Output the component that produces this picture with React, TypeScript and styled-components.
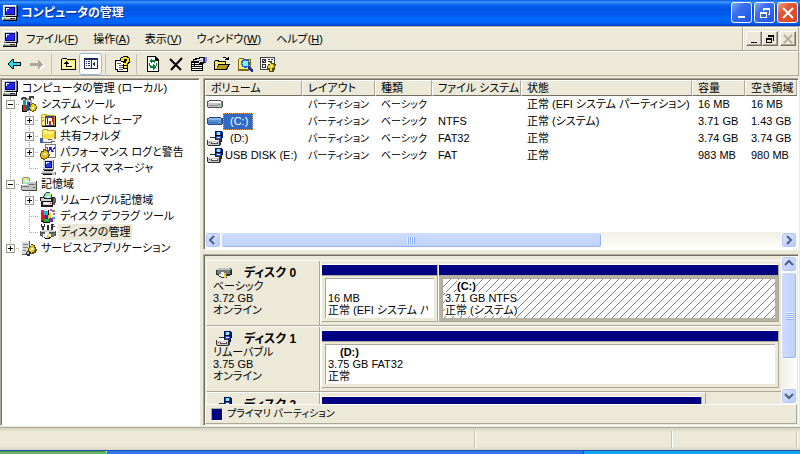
import React from "react";
import styled, { createGlobalStyle, css } from "styled-components";

const face = "#ece9d8";
const shade = "#aca899";
const dark = "#716f64";
const navy = "#000080";

const GlobalStyle = createGlobalStyle`
  * { box-sizing: border-box; }
  body {
    margin: 0;
    overflow: hidden;
    background: ${face};
    color: #000;
    font-family: "Liberation Sans", "Noto Sans CJK JP", sans-serif;
    font-size: 11px;
    line-height: 16px;
    font-feature-settings: "palt";
    cursor: default;
  }
  button {
    font: inherit;
    font-feature-settings: inherit;
    color: inherit;
    margin: 0;
    padding: 0;
    border: 0;
    background: none;
  }
  svg { display: block; flex: none; }
`;

/* ---------- icons ---------- */

const Glyph = ({ children, w = 16, h = 16 }: { children: React.ReactNode; w?: number; h?: number }) => (
  <svg width={w} height={h} viewBox={`0 0 ${w} ${h}`} shapeRendering="crispEdges" aria-hidden="true">
    {children}
  </svg>
);

const ComputerIcon = () => (
  <Glyph>
    <path fill="#707070" d="M2 0h13v12H2z" />
    <path fill="#fff" d="M1 0h13v1H1zM1 0h1v11H1z" />
    <path fill="#c8c8c8" d="M2 1h12v10H2z" />
    <path fill="#000080" d="M3 2h10v8H3z" />
    <path fill="#2424ff" d="M4 3h8v6H4z" />
    <path fill="#fff" d="M4 3h3v1H5v2H4z" />
    <path fill="#000" d="M15 1h1v11H4v-1h11zM1 15h14v1H1zM14 12h1v4h-1z" />
    <path fill="#c8c8c8" d="M0 12h14v3H0z" />
    <path fill="#fff" d="M0 12h14v1H0zM0 12h1v3H0z" />
    <path fill="#303030" d="M8 13h5v1H8z" />
    <path fill="#808080" d="M1 14h13v1H1z" />
    <path fill="#0a0" d="M2 13h1v1H2z" />
  </Glyph>
);

const ToolsIcon = () => (
  <Glyph>
    <path fill="#404040" d="M1 1h4v1h1v2H4V3H2v1H0V2h1zM8 0h5v3h-1V2h-2v2H8z" />
    <path fill="#00a0a0" d="M2 4h3v5H2z" />
    <path fill="#e02020" d="M2 9h3v6H2z" />
    <path fill="#2040e0" d="M6 6h2v9H6z" />
    <path fill="#a0a0a0" d="M6 2h2v4H6zM9 4h2v5H9z" />
    <path fill="#108020" d="M5 9h1v6H5zM9 9h1v3H9z" />
    <path fill="#000" d="M1 9h1v6h4v1H1zM8 6h1v8H8z" />
    <path fill="#806000" d="M11 7h2v1h2v2h1v3h-1v2h-2v1h-2v-1H9v-2H8v-3h1V8h2z" />
    <path fill="#f0d020" d="M11 8h2v1h1v1h1v2h-1v2h-2v1h-1v-1h-1v-1H9v-2h1V9h1z" />
    <path fill="#fff" d="M11 11h2v2h-2z" />
  </Glyph>
);

const EventIcon = () => (
  <Glyph>
    <path fill="#c8a020" d="M1 3h1V2h5v1h8v11H1z" />
    <path fill="#fff27c" d="M2 3h4v1h8v9H2z" />
    <path fill="#000" d="M2 14h14v1H2zM15 4h1v11h-1z" />
    <path fill="#404080" d="M5 4h9v10H5z" />
    <path fill="#fff" d="M6 6h7v7H6z" />
    <path fill="#2020d0" d="M7 6h1v6H7z" />
    <path fill="#e02020" d="M9 9h2v4H9zM12 6h1v4h-1z" />
    <path fill="#f08000" d="M2 5h2v1H2zM2 8h2v1H2z" />
  </Glyph>
);

const SharedFolderIcon = () => (
  <Glyph>
    <path fill="#c8a020" d="M2 2h1V1h5v1h7v10H2z" />
    <path fill="#fff27c" d="M3 2h4v1h7v8H3z" />
    <path fill="#ffe040" d="M3 6h11v5H3z" />
    <path fill="#808080" d="M15 3h1v9h-1z" />
    <path fill="#4060a0" d="M0 10h3v5H0z" />
    <path fill="#f0f0f0" d="M3 11h6v-1h4v1h3v2h-5v1H3z" />
    <path fill="#606060" d="M3 14h8v-1h4v1h-3v1H3zM8 11h4v1H8z" />
  </Glyph>
);

const PerformanceIcon = () => (
  <Glyph>
    <path fill="#808080" d="M5 0h11v14H5z" />
    <path fill="#fff" d="M6 1h9v12H6z" />
    <path fill="none" stroke="#e02020" d="M6 3h1v3h2V3h2v4h3" />
    <path fill="none" stroke="#2020e0" d="M6 7l2 2 2-6 2 5 3-5" />
    <path fill="#605000" d="M3 5h3v1h2v2h1v2h1v2H9v2H7v1H5v1H3v-1H1v-2H0V9h1V7h2z" />
    <path fill="#e0c020" d="M4 6h1v1h2v1h1v2h1v1H8v2H7v1H5v1H4v-1H2v-1H1V9h1V8h2z" />
    <path fill="#fff" d="M4 9h2v2H4z" />
  </Glyph>
);

const DeviceIcon = () => (
  <Glyph>
    <path fill="#606060" d="M3 0h11v10H3z" />
    <path fill="#d8d8d8" d="M3 0h10v9H3z" />
    <path fill="#000090" d="M5 1h7v7H5z" />
    <path fill="#2838ff" d="M6 2h5v5H6z" />
    <path fill="#fff" d="M6 2h3v1H7v1H6z" />
    <path fill="#000" d="M4 10h9v1H4zM3 14h10v1H3z" />
    <path fill="#c8c8c8" d="M2 11h10v2H2zM12 12h3v3h-3z" />
    <path fill="#707070" d="M1 13h11v1H1zM12 15h4v-3h-1v3z" />
  </Glyph>
);

const StorageIcon = () => (
  <Glyph>
    <circle cx="5" cy="5" r="4.500" fill="#909090" />
    <circle cx="5" cy="5" r="3.500" fill="#a8f0c0" />
    <path fill="#f0f040" d="M3 2h3v2H3z" />
    <path fill="#fff" d="M4 4h2v2H4z" />
    <path fill="#c4c4c4" d="M1 8h9v6H1zM6 5h9v9H6z" />
    <path fill="#fff" d="M6 5h9v1H6zM0 8h6v1H0z" />
    <path fill="#404040" d="M15 5h1v10h-1zM1 14h15v1H1z" />
    <path fill="#707070" d="M0 9h1v5H0zM8 8h6v1H8zM2 10h6v1H2z" />
    <path fill="#0a0" d="M12 11h2v1h-2z" />
  </Glyph>
);

const RemovableIcon = () => (
  <Glyph>
    <circle cx="8" cy="4.500" r="4.500" fill="#404040" />
    <circle cx="8" cy="4.500" r="3.500" fill="#80e8d0" />
    <path fill="#f0f040" d="M9 1h2v3H9z" />
    <path fill="#fff" d="M7 4h2v2H7z" />
    <path fill="#202020" d="M0 5h4v1h8v-1h3v4h-2v6H1V9H0z" />
    <path fill="#d0d0d0" d="M1 6h3v1h7v2H1zM3 10h9v3H3z" />
    <path fill="#fff" d="M4 11h6v1H4z" />
    <path fill="#606060" d="M13 6h3v5h-1v2h-2z" />
    <path fill="#e02020" d="M10 11h1v1h-1z" />
  </Glyph>
);

const DefragIcon = () => (
  <Glyph>
    <path fill="#e01890" d="M1 2h3v3H1z" />
    <path fill="#d02020" d="M1 5h4v8H1z" />
    <path fill="#10c0c0" d="M4 3h4v4H4z" />
    <path fill="#2030e0" d="M5 7h3v6H5z" />
    <path fill="#e8d020" d="M8 5h3v6H8z" />
    <path fill="#20b030" d="M4 11h5v3H4z" />
    <path fill="#8020c0" d="M9 10h4v4H9z" />
    <path fill="#000" d="M1 13h3v1h6v1H3v-1H1zM8 2h1v5H8z" />
    <path fill="#e040e0" d="M10 1h2v1h1v2h-1V3h-2zM13 5h2v2h-2z" />
    <path fill="#20c020" d="M13 2h2v2h-2z" />
    <path fill="#30a0f0" d="M12 9h3v2h-3z" />
  </Glyph>
);

const DiskManagementIcon = () => (
  <Glyph>
    <path fill="#303030" d="M1 0h1v2h2V0h1v3H4v3H2V3H1zM7 1h2v6H7zM11 0h3v1h-1v1h2v1h-2v3h-2z" />
    <path fill="#505050" d="M0 7h2V6h12v1h2v5h-2v1H2v-1H0z" />
    <path fill="#d0d0d0" d="M2 6h12v1h1v1H1V7h1z" />
    <path fill="#707070" d="M1 9h14v3H1z" />
    <path fill="#f4f4f4" d="M5 8h4v2h2v3H9v1H5v-1H3v-3h2z" />
    <path fill="#000" d="M4 13h1v1h4v-1h2v1h-1v1H5v-1H4z" />
    <path fill="#e8d020" d="M7 11h2v3H7z" />
    <path fill="#0a0" d="M12 9h1v1h-1z" />
  </Glyph>
);

const ServicesIcon = () => (
  <Glyph>
    <path fill="#606060" d="M1 1h8v14H1z" />
    <path fill="#d8d8d8" d="M1 1h7v13H1z" />
    <path fill="#fff" d="M2 0h6v2H2z" />
    <path fill="#808080" d="M2 4h5v1H2zM2 7h5v1H2zM2 10h3v1H2z" />
    <path fill="#605000" d="M10 4h2v1h2v2h1v2h1v2h-1v2h-2v1h-3v-1H8v-2H7V8h1V6h2z" />
    <path fill="#e8c820" d="M10 5h2v1h1v2h1v2h-1v2h-2v1h-1v-1H9v-1H8V8h1V7h1z" />
    <path fill="#fff" d="M10 8h2v2h-2z" />
    <path fill="#303030" d="M6 11h2v1h2v2H9v2H6v-1H5v-3h1z" />
    <path fill="#c0c0c0" d="M6 12h2v2H6z" />
  </Glyph>
);

const DriveIcon = ({ selected = false }: { selected?: boolean }) => (
  <Glyph>
    <path fill={selected ? "#1c4888" : "#505050"} d="M2 3h12v1h2v6h-1v1H1v-1H0V4h2z" />
    <path fill={selected ? "#8cb4ec" : "#f8f8f8"} d="M2 4h12v1h1v1H1V5h1z" />
    <path fill={selected ? "#5b8ed0" : "#c4c4c4"} d="M1 6h13v4H1z" />
    <path fill={selected ? "#3c6cb0" : "#8c8c8c"} d="M14 5h1v5h-1zM2 8h9v1H2z" />
    <path fill={selected ? "#40c0a0" : "#20c020"} d="M11 7h2v1h-2z" />
  </Glyph>
);

const RemovableDriveIcon = () => (
  <Glyph>
    <path fill="#001070" d="M8 0h7v1h1v6h-1v4H9V8H8z" />
    <path fill="#2050c8" d="M9 1h5v8H9z" />
    <path fill="#80f0e8" d="M10 1h3v3h-3z" />
    <path fill="#000" d="M9 4h5v1H9z" />
    <path fill="#fff" d="M10 6h3v1h-3z" />
    <path fill="#303030" d="M3 6h5v2h6v6h-1v1H1v-1H0V9h3z" />
    <path fill="#f8f8f8" d="M3 7h5v2h4v1H1V9h2z" />
    <path fill="#c8c8c8" d="M1 10h11v4H1z" />
    <path fill="#505050" d="M4 11h7v2H4z" />
    <path fill="#fff" d="M5 11h5v1H5z" />
    <path fill="#e02020" d="M2 11h1v1H2z" />
  </Glyph>
);

const HardDiskIcon = () => (
  <Glyph>
    <path fill="#303030" d="M2 3h13v1h1v6h-2v1H2v-1H0V5h2z" />
    <path fill="#c0c0c0" d="M2 3h12v1h1v1H1V4h1z" />
    <path fill="#787878" d="M1 5h13v4H1z" />
    <path fill="#f0f0f0" d="M5 7h3v1h2v2H8v2H5v-1H3V9h2z" />
    <path fill="#303030" d="M3 11h2v1h3v1H5v-1H3zM8 12h3v1H8z" />
    <path fill="#e8d020" d="M8 8h2v5H8z" />
    <path fill="#20d020" d="M12 6h1v1h-1z" />
  </Glyph>
);

const BackIcon = () => (
  <Glyph>
    <path fill="#000" d="M2 7h1V6h1V5h1V4h1V3h2v3h7v4H8v3H6v-1H5v-1H4v-1H3V9H2z" />
    <path fill="#20e0f0" d="M3 7h1V6h1V5h1V4h1v3h7v2H7v3H6v-1H5v-1H4V9H3z" />
  </Glyph>
);

const ForwardIcon = () => (
  <Glyph>
    <path fill="#fff" d="M2 8h8V5l6 4-5 5v-4H2z" />
    <path fill={shade} d="M1 7h8V4h1v1h1v1h1v1h1v1h1v1h-1v1h-1v1h-1v1h-1v1H9v-3H1z" />
  </Glyph>
);

const FolderUpIcon = () => (
  <Glyph>
    <path fill="#000" d="M1 3h1V2h5v1h9v11H1z" />
    <path fill="#fff6a0" d="M2 3h5v1h8v9H2z" />
    <path fill="#ffe858" d="M2 4h13v1H2z" />
    <path fill="#000" d="M6 5h1v1h1v1h1v1H7v2h5v1H6V8H4V7h1V6h1z" />
  </Glyph>
);

const TreeToggleIcon = () => (
  <Glyph>
    <path fill="#202860" d="M1 2h14v11H1z" />
    <path fill="#fff" d="M2 4h6v8H2zM9 4h5v8H9z" />
    <path fill="#202860" d="M3 5h1v1H3zM5 5h2v1H5zM3 7h1v1H3zM5 7h2v1H5zM3 9h1v1H3zM5 9h2v1H5zM12 5v6l-3-3z" />
  </Glyph>
);

const HelpIcon = () => (
  <Glyph>
    <path fill="#000" d="M1 4h8v2h5v10H3v-2H1z" />
    <path fill="#fff" d="M2 5h7v8H2zM4 7h9v8H4z" />
    <path fill="#606060" d="M3 7h4v1H3zM5 9h4v1H5zM5 11h5v1H5zM5 13h4v1H5z" />
    <path fill="#000" d="M6 2h1V1h2V0h5v1h1v1h1v5h-1v1h-1v5H9V8h1V6H7V5H6z" />
    <path fill="#ffe820" d="M7 2h2V1h4v1h2v4h-1v1h-1v2h-3V7h2V5h1V3h-3v2H7zM10 10h3v2h-3z" />
  </Glyph>
);

const RefreshIcon = () => (
  <Glyph>
    <path fill="#000" d="M2 0h9l3 4v12H2z" />
    <path fill="#fff" d="M3 1h7v4h3v10H3z" />
    <path fill="#000" d="M10 1h1v3h2v1h-3z" />
    <path fill="#008030" d="M7 3v1h3v3H9V6H7v2L4 5zM4 7h1v2h1v1H4zM8 8l3 3-3 3v-2H5v-2h3zM11 7h1v3h-1z" />
  </Glyph>
);

const DeleteIcon = () => (
  <Glyph>
    <path stroke="#000" strokeWidth="2" shapeRendering="auto" d="M2 3l11 11M14 2L3 14" />
  </Glyph>
);

const PropertiesIcon = () => (
  <Glyph>
    <path fill="#000" d="M0 5h12v10H0z" />
    <path fill="#fff" d="M1 7h2v1H1zM4 7h7v1H4zM1 9h2v1H1zM4 9h7v1H4zM1 11h10v1H1zM1 13h10v1H1z" />
    <path fill="#000" d="M2 3h2V2h4V1h5v7H8V7H6V6H2z" />
    <path fill="#e8e8e8" d="M3 4h3V3h3V2h3v4H9v1H8V5H3z" />
    <path fill="#909090" d="M7 4h4v1H7z" />
    <path fill="#202878" d="M12 1h3v6h-3z" />
    <path fill="#8090d0" d="M14 1h2v5h-2z" />
  </Glyph>
);

const OpenIcon = () => (
  <Glyph>
    <path fill="#000" d="M1 4h4v1h7v3h4v1h-1v2h-1v2h-1v1H0V5h1zM9 1h3v1h2V1h1v3h-4V3h1V2H9z" />
    <path fill="#ffe860" d="M1 5h3v1h7v2H4v2H3v2H2v1H1z" />
    <path fill="#b89c20" d="M5 9h9v1h-1v2h-1v1H2v-1h1v-1h1v-1h1z" />
  </Glyph>
);

const SearchIcon = () => (
  <Glyph>
    <path fill="#806800" d="M1 3h1V2h5v1h7v11H1z" />
    <path fill="#fff27c" d="M2 3h4v1h7v9H2z" />
    <circle cx="8.500" cy="7.500" r="4.500" fill="#2060d0" />
    <circle cx="8.500" cy="7.500" r="3" fill="#80f0ff" />
    <path fill="#fff" d="M7 5h2v1H7z" />
    <path fill="#1030b0" d="M11 10h2v1h1v1h1v1h1v3h-2v-1h-1v-1h-1v-1h-1z" />
    <path fill="#806800" d="M1 14h11v1H1z" />
  </Glyph>
);

const SettingsIcon = () => (
  <Glyph>
    <path fill="#404040" d="M0 1h15v13H0z" />
    <path fill="#fff" d="M1 2h13v11H1z" />
    <path fill="#303030" d="M2 3h4v4H2zM2 8h4v4H2zM8 3h2v1H8zM11 3h2v1h-2zM8 5h4v1H8z" />
    <path fill="#fff" d="M3 4h1v1H3zM4 5h1v1H4zM3 9h2v2H3z" />
    <path fill="#605000" d="M10 6h2v1h2v1h2v2h-1v3h-2v1h1v2H9v-3H7v-3h1V8h2z" />
    <path fill="#f0d820" d="M10 7h1v1h2v1h1v2h-1v1h-1v3h-2v-3H8v-2h1V9h1z" />
    <path fill="#fff" d="M10 10h2v1h-2z" />
  </Glyph>
);

const MinimizeGlyph = () => (
  <Glyph w={12} h={12}>
    <path fill="currentColor" d="M2 9h7v2H2z" />
  </Glyph>
);
const RestoreGlyph = () => (
  <Glyph w={12} h={12}>
    <path fill="currentColor" d="M4 1h7v7H9V7h1V3H5v1H4zM1 5h7v6H1zM2 7v3h5V7z" fillRule="evenodd" />
  </Glyph>
);
const CloseGlyph = () => (
  <Glyph w={12} h={12}>
    <path stroke="currentColor" strokeWidth="2" shapeRendering="auto" d="M1 1l10 10M11 1L1 11" />
  </Glyph>
);

const chevrons = { left: "M6 1L2 5l4 4", right: "M3 1l4 4-4 4", up: "M1 6l4-4 4 4", down: "M1 3l4 4 4-4" };
type Direction = keyof typeof chevrons;

/* ---------- window frame ---------- */

const Screen = styled.div`
  display: flex;
  flex-direction: column;
  height: 100vh;
  overflow: hidden;
`;

const TitleBar = styled.header`
  flex: none;
  height: 26px;
  display: flex;
  align-items: center;
  gap: 3px;
  padding: 0 2px 1px 2px;
  color: #fff;
  background: linear-gradient(#0a5ae8 0, #3c98ff 2px, #0a63f0 5px, #0055e4 9px, #0058ea 14px, #0068ff 19px, #0062f6 23px, #003cc4 26px);
`;

const WindowTitle = styled.h1`
  flex: 1;
  margin: 0;
  font-size: 12px;
  font-weight: 700;
  white-space: nowrap;
  text-shadow: 1px 1px 0 #0a2a90;
`;

const CaptionButtons = styled.div`
  display: flex;
  gap: 2px;
`;

const CaptionButton = styled.button<{ $close?: boolean }>`
  width: 21px;
  height: 21px;
  display: grid;
  place-items: center;
  border: 1px solid #fff;
  border-radius: 3px;
  color: #fff;
  background: ${(p) =>
    p.$close
      ? "linear-gradient(135deg, #f0a48c 0, #e0593a 35%, #d8431c 100%)"
      : "linear-gradient(135deg, #84a8f8 0, #3c70ec 35%, #1c56e8 100%)"};
`;

const MenuBar = styled.nav`
  flex: none;
  height: 25px;
  display: flex;
  margin-right: 1px;
  border-top: 1px solid ${shade};
  border-bottom: 1px solid ${shade};
  box-shadow: inset 0 1px 0 #fff;
`;

const MenuItems = styled.div`
  flex: 1;
  display: flex;
  align-items: center;
  gap: 8px;
  padding-left: 2px;
  border-right: 1px solid ${shade};
`;

const MenuList = styled.div`
  display: flex;
  gap: 15px;
`;

const MenuButton = styled.button`
  height: 20px;
  white-space: nowrap;
`;

const ChildButtons = styled.div`
  display: flex;
  align-items: center;
  padding: 0 2px;
  border-left: 1px solid #fff;
  border-right: 1px solid ${shade};
`;

const ChildButton = styled.button<{ $muted?: boolean }>`
  width: 16px;
  height: 15px;
  display: grid;
  place-items: center;
  border: 1px solid;
  border-color: #fff ${dark} ${dark} #fff;
  box-shadow: inset -1px -1px 0 ${shade};
  ${(p) => p.$muted && css`margin-left: 2px; color: ${shade};`}
  svg { width: 10px; height: 10px; }
`;

const Toolbar = styled.div`
  flex: none;
  height: 25px;
  display: flex;
  align-items: center;
  margin-right: 1px;
  padding-left: 2px;
  border-top: 1px solid #fff;
  border-right: 1px solid ${shade};
  border-bottom: 1px solid ${shade};
`;

const ToolButton = styled.button<{ $pressed?: boolean }>`
  width: 23px;
  height: 22px;
  display: grid;
  place-items: center;
  border: 1px solid ${(p) => (p.$pressed ? "#98b5e2" : "transparent")};
  border-radius: 3px;
  background: ${(p) => (p.$pressed ? "#fff" : "none")};
`;

const ToolSeparator = styled.span`
  width: 1px;
  height: 20px;
  margin: 0 4px 0 3px;
  background: #c5c2b2;
`;

const Body = styled.main`
  flex: 1;
  min-height: 0;
  display: grid;
  grid-template-columns: 200px minmax(0, 1fr);
  gap: 3px;
  padding: 2px 1px 1px 0;
`;

const Sunken = styled.section`
  min-width: 0;
  min-height: 0;
  display: flex;
  flex-direction: column;
  padding: 1px;
  border: 1px solid;
  border-color: ${shade} #fff #fff ${shade};
  box-shadow: inset 1px 1px 0 ${dark};
  overflow: hidden;
`;

/* ---------- tree ---------- */

const TreePanel = styled(Sunken)`
  background: #fff;
`;

const Tree = styled.ul`
  margin: 0;
  padding: 0;
  list-style: none;
`;

const TreeItem = styled.li`
  height: 16px;
  display: flex;
  align-items: center;
  white-space: nowrap;
`;

type Line = "full" | "half";

const Branch = styled.span<{ $line: Line; $arm?: boolean }>`
  flex: none;
  width: 19px;
  height: 16px;
  display: flex;
  align-items: center;
  padding-left: 4px;
  background-repeat: no-repeat;
  background-image: ${(p) =>
    [
      `repeating-linear-gradient(${shade} 0 1px, transparent 1px 2px)`,
      p.$arm ? `repeating-linear-gradient(90deg, ${shade} 0 1px, transparent 1px 2px)` : "none",
    ].join(", ")};
  background-size: 1px ${(p) => (p.$line === "half" ? 8 : 16)}px, 10px 1px;
  background-position: 8px 0, 8px 8px;
`;

const Expander = styled.button`
  width: 9px;
  height: 9px;
  border: 1px solid #999785;
  background: #fff;
`;

const TreeLabel = styled.span<{ $selected?: boolean }>`
  height: 16px;
  padding: 0 2px;
  margin-left: 2px;
  background: ${(p) => (p.$selected ? face : "none")};
`;

type Node = { label: string; icon: React.ReactNode; branches: Line[]; state?: "+" | "-" };

const nodes: Node[] = [
  { label: "コンピュータの管理 (ローカル)", icon: <ComputerIcon />, branches: [] },
  { label: "システム ツール", icon: <ToolsIcon />, branches: ["full"], state: "-" },
  { label: "イベント ビューア", icon: <EventIcon />, branches: ["full", "full"], state: "+" },
  { label: "共有フォルダ", icon: <SharedFolderIcon />, branches: ["full", "full"], state: "+" },
  { label: "パフォーマンス ログと警告", icon: <PerformanceIcon />, branches: ["full", "full"], state: "+" },
  { label: "デバイス マネージャ", icon: <DeviceIcon />, branches: ["full", "half"] },
  { label: "記憶域", icon: <StorageIcon />, branches: ["full"], state: "-" },
  { label: "リムーバブル記憶域", icon: <RemovableIcon />, branches: ["full", "full"], state: "+" },
  { label: "ディスク デフラグ ツール", icon: <DefragIcon />, branches: ["full", "full"] },
  { label: "ディスクの管理", icon: <DiskManagementIcon />, branches: ["full", "half"] },
  { label: "サービスとアプリケーション", icon: <ServicesIcon />, branches: ["half"], state: "+" },
];

/* ---------- volume list ---------- */

const RightColumn = styled.div`
  min-width: 0;
  min-height: 0;
  display: grid;
  grid-template-rows: 172px minmax(0, 1fr);
  gap: 4px;
`;

const ListPanel = styled(Sunken)`
  background: #fff;
`;

const TableArea = styled.div`
  flex: 1;
  min-height: 0;
  overflow: hidden;
`;

const VolumeTable = styled.table`
  width: 100%;
  table-layout: fixed;
  border-collapse: separate;
  border-spacing: 0;
`;

const HeadCell = styled.th`
  height: 16px;
  padding: 0 0 0 5px;
  text-align: left;
  font-weight: 400;
  line-height: 14px;
  white-space: nowrap;
  background: ${face};
  border: 1px solid;
  border-color: #fff ${shade} ${dark} #fff;
`;

const Cell = styled.td<{ $compact?: boolean }>`
  height: 17px;
  padding: 0 0 0 6px;
  font-size: ${(p) => (p.$compact ? 10 : 11)}px;
  line-height: 17px;
  white-space: nowrap;
`;

const NameCell = styled(Cell)`
  padding-left: 2px;
`;

const VolumeName = styled.div`
  display: flex;
  align-items: center;
`;

const VolumeLabel = styled.span<{ $selected?: boolean; $indent?: boolean }>`
  height: 17px;
  padding: 0 5px 0 ${(p) => (p.$indent ? 7 : 2)}px;
  ${(p) =>
    p.$selected &&
    css`
      color: #fff;
      background: #316ac5;
      outline: 1px dotted #e0a050;
      outline-offset: -1px;
    `}
`;

const columns = [
  { title: "ボリューム", width: 97 },
  { title: "レイアウト", width: 73 },
  { title: "種類", width: 57 },
  { title: "ファイル システム", width: 89 },
  { title: "状態", width: 171 },
  { title: "容量", width: 53 },
  { title: "空き領域" },
];

const volumes = [
  { name: "", icon: <DriveIcon />, fs: "", status: "正常 (EFI システム パーティション)", size: "16 MB", free: "16 MB" },
  { name: "(C:)", icon: <DriveIcon selected />, selected: true, fs: "NTFS", status: "正常 (システム)", size: "3.71 GB", free: "1.43 GB" },
  { name: "(D:)", icon: <RemovableDriveIcon />, fs: "FAT32", status: "正常", size: "3.74 GB", free: "3.74 GB" },
  { name: "USB DISK (E:)", icon: <RemovableDriveIcon />, fs: "FAT", status: "正常", size: "983 MB", free: "980 MB" },
];

/* ---------- scroll bars ---------- */

const ScrollTrack = styled.div<{ $vertical?: boolean }>`
  flex: none;
  display: flex;
  flex-direction: ${(p) => (p.$vertical ? "column" : "row")};
  ${(p) => (p.$vertical ? "width: 16px;" : "height: 16px;")}
  background: linear-gradient(${(p) => (p.$vertical ? "90deg" : "180deg")}, #f0efe8, #fefefb);
`;

const ScrollButton = styled.button`
  flex: none;
  width: 16px;
  height: 16px;
  display: grid;
  place-items: center;
  border: 1px solid #fff;
  border-radius: 3px;
  box-shadow: inset 0 0 0 1px #b4c8f4;
  background: linear-gradient(135deg, #dce6ff, #b4c9fa);
`;

const ScrollThumb = styled.div<{ $vertical?: boolean }>`
  flex: ${(p) => (p.$vertical ? "0 0 75%" : "0 0 68%")};
  display: grid;
  place-items: center;
  border: 1px solid #fff;
  border-radius: 3px;
  box-shadow: inset -1px -1px 0 #98b4ee;
  background: linear-gradient(${(p) => (p.$vertical ? "90deg" : "180deg")}, #cddcff, #bed2fd);
`;

const ThumbRange = styled.div<{ $vertical?: boolean }>`
  flex: 1;
  min-width: 0;
  min-height: 0;
  display: flex;
  flex-direction: ${(p) => (p.$vertical ? "column" : "row")};
`;

const Grip = styled.span<{ $vertical?: boolean }>`
  width: ${(p) => (p.$vertical ? 7 : 8)}px;
  height: ${(p) => (p.$vertical ? 8 : 7)}px;
  background: repeating-linear-gradient(${(p) => (p.$vertical ? "180deg" : "90deg")}, #eef4fe 0 1px, #8cb0f8 1px 2px);
`;

const Arrow = ({ dir, label }: { dir: Direction; label: string }) => (
  <ScrollButton type="button" aria-label={label}>
    <svg width="10" height="10" viewBox="0 0 10 10" aria-hidden="true">
      <path d={chevrons[dir]} fill="none" stroke="#4d6185" strokeWidth="2" />
    </svg>
  </ScrollButton>
);

/* ---------- disk map ---------- */

const DiskPanel = styled(Sunken)`
  background: ${face};
`;

const DiskArea = styled.div`
  flex: 1;
  min-height: 0;
  display: flex;
`;

const DiskList = styled.div`
  flex: 1;
  min-width: 0;
  padding: 4px 0 0 1px;
  overflow: hidden;
`;

const DiskRow = styled.article<{ $partial?: boolean }>`
  width: ${(p) => (p.$partial ? "87%" : "100%")};
  height: 66px;
  display: flex;
  border-top: 1px solid #fff;
  border-left: 1px solid #fff;
  border-bottom: 1px solid ${shade};
  border-right: ${(p) => (p.$partial ? `1px solid ${shade}` : "0")};
`;

const DiskInfo = styled.div`
  flex: none;
  width: 113px;
  padding: 4px 0 0 6px;
  line-height: 12px;
  border-right: 1px solid ${shade};
`;

const DiskHeading = styled.div`
  height: 15px;
  display: flex;
  align-items: center;
  gap: 12px;
  padding-left: 3px;
`;

const DiskTitle = styled.h2`
  margin: 0;
  font-size: 12px;
  line-height: 14px;
  font-weight: 700;
`;

const TextLine = styled.div`
  height: 12px;
  white-space: nowrap;
`;

const Partitions = styled.div<{ $partial?: boolean }>`
  flex: 1;
  min-width: 0;
  display: flex;
  padding: 3px ${(p) => (p.$partial ? 3 : 2)}px 3px 0;
  border-left: 1px solid #fff;
`;

const Partition = styled.div<{ $share: number; $selected?: boolean }>`
  flex: ${(p) => p.$share} 1 0;
  min-width: 0;
  display: flex;
  flex-direction: column;
  border: 1px solid;
  border-color: #fff ${shade} ${shade} #fff;
  background: ${(p) => (p.$selected ? "#b5b2a2" : face)};
`;

const PartitionBar = styled.div`
  flex: none;
  height: 11px;
  background: ${navy};
  border-bottom: 1px solid ${shade};
`;

const PartitionBox = styled.div<{ $selected?: boolean }>`
  flex: 1;
  margin: 2px 3px 3px 3px;
  padding: 1px 6px 0 2px;
  line-height: 12px;
  overflow: hidden;
  border-top: 1px solid ${shade};
  border-left: 1px solid ${shade};
  background-color: #fff;
  ${(p) =>
    p.$selected &&
    css`
      background-image: linear-gradient(135deg, transparent 49%, #808080 49% 51%, transparent 51%);
      background-size: 8px 8px;
    `}
`;

const PartitionLine = styled(TextLine)<{ $name?: boolean }>`
  width: fit-content;
  max-width: 100%;
  overflow: hidden;
  background: #fff;
  ${(p) => p.$name && css`margin-left: 12px; font-weight: 700;`}
`;

const Legend = styled.div`
  flex: none;
  height: 20px;
  display: flex;
  align-items: center;
  gap: 4px;
  padding-left: 5px;
  border: 1px solid;
  border-color: #fff ${shade} ${shade} #fff;
  font-size: 10px;
`;

const Swatch = styled.span`
  width: 12px;
  height: 13px;
  background: ${navy};
  border: 1px solid;
  border-color: ${shade} #fff #fff ${shade};
`;

type Part = { share: number; name?: string; size: string; status: string; selected?: boolean };
type Disk = { title: string; kind: string; size: string; icon: React.ReactNode; parts: Part[]; partial?: boolean };

const disks: Disk[] = [
  {
    title: "ディスク 0",
    kind: "ベーシック",
    size: "3.72 GB",
    icon: <HardDiskIcon />,
    parts: [
      { share: 116, size: "16 MB", status: "正常 (EFI システム パーティション)" },
      { share: 342, name: "(C:)", size: "3.71 GB NTFS", status: "正常 (システム)", selected: true },
    ],
  },
  {
    title: "ディスク 1",
    kind: "リムーバブル",
    size: "3.75 GB",
    icon: <RemovableDriveIcon />,
    parts: [{ share: 1, name: "(D:)", size: "3.75 GB FAT32", status: "正常" }],
  },
  {
    title: "ディスク 2",
    kind: "リムーバブル",
    size: "983 MB",
    icon: <RemovableDriveIcon />,
    partial: true,
    parts: [{ share: 1, name: "(E:)", size: "983 MB FAT", status: "正常" }],
  },
];

/* ---------- bottom ---------- */

const StatusBar = styled.footer`
  flex: none;
  height: 23px;
  display: grid;
  grid-template-columns: 476fr 197fr 125fr;
  padding: 3px 2px 2px 0;
  border-top: 1px solid #b0ad9e;
  background: linear-gradient(#d4d1c2 0, ${face} 4px, ${face} 18px, #d8d5c6 22px);
`;

const StatusCell = styled.div`
  border-right: 1px solid #fff;
  box-shadow: inset -1px 0 0 #c5c2b2;
`;

const Taskbar = styled.div`
  flex: none;
  height: 4px;
  display: grid;
  grid-template-columns: 107px 1fr 217px;
  border-top: 1px solid #1a4fb8;
`;

const TaskStart = styled.div`
  background: linear-gradient(#3f9a44, #7cc078);
  border-radius: 0 3px 0 0;
`;
const TaskArea = styled.div`
  background: #2f78ea;
`;
const TaskTray = styled.div`
  background: #12a4f0;
  border-left: 1px solid #0a4a90;
`;

const menus = [
  ["ファイル", "F"],
  ["操作", "A"],
  ["表示", "V"],
  ["ウィンドウ", "W"],
  ["ヘルプ", "H"],
];

const tools: ({ label: string; icon: React.ReactNode; pressed?: boolean } | null)[] = [
  { label: "戻る", icon: <BackIcon /> },
  { label: "進む", icon: <ForwardIcon /> },
  null,
  { label: "上へ", icon: <FolderUpIcon /> },
  { label: "コンソール ツリーの表示", icon: <TreeToggleIcon />, pressed: true },
  null,
  { label: "ヘルプ", icon: <HelpIcon /> },
  null,
  { label: "最新の情報に更新", icon: <RefreshIcon /> },
  { label: "削除", icon: <DeleteIcon /> },
  { label: "プロパティ", icon: <PropertiesIcon /> },
  { label: "開く", icon: <OpenIcon /> },
  { label: "検索", icon: <SearchIcon /> },
  { label: "設定", icon: <SettingsIcon /> },
];

export default function App() {
  return (
    <Screen>
      <GlobalStyle />
      <TitleBar>
        <ComputerIcon />
        <WindowTitle>コンピュータの管理</WindowTitle>
        <CaptionButtons>
          <CaptionButton type="button" aria-label="最小化"><MinimizeGlyph /></CaptionButton>
          <CaptionButton type="button" aria-label="元に戻す"><RestoreGlyph /></CaptionButton>
          <CaptionButton type="button" aria-label="閉じる" $close><CloseGlyph /></CaptionButton>
        </CaptionButtons>
      </TitleBar>

      <MenuBar>
        <MenuItems>
          <ComputerIcon />
          <MenuList>
            {menus.map(([name, key]) => (
              <MenuButton type="button" key={key}>
                {name}(<u>{key}</u>)
              </MenuButton>
            ))}
          </MenuList>
        </MenuItems>
        <ChildButtons>
          <ChildButton type="button" aria-label="最小化"><MinimizeGlyph /></ChildButton>
          <ChildButton type="button" aria-label="元に戻す"><RestoreGlyph /></ChildButton>
          <ChildButton type="button" aria-label="閉じる" $muted><CloseGlyph /></ChildButton>
        </ChildButtons>
      </MenuBar>

      <Toolbar>
        {tools.map((tool, i) =>
          tool ? (
            <ToolButton type="button" key={i} aria-label={tool.label} $pressed={tool.pressed}>
              {tool.icon}
            </ToolButton>
          ) : (
            <ToolSeparator key={i} />
          )
        )}
      </Toolbar>

      <Body>
        <TreePanel>
          <Tree>
            {nodes.map((node) => (
              <TreeItem key={node.label}>
                {node.branches.map((line, depth) => {
                  const last = depth === node.branches.length - 1;
                  return (
                    <Branch key={depth} $line={line} $arm={last}>
                      {last && node.state && (
                        <Expander type="button" aria-label={node.state === "+" ? "展開" : "折りたたむ"}>
                          <Glyph w={7} h={7}>
                            <path fill="#000" d={node.state === "+" ? "M1 3h5v1H1zM3 1h1v5H3z" : "M1 3h5v1H1z"} />
                          </Glyph>
                        </Expander>
                      )}
                    </Branch>
                  );
                })}
                {node.icon}
                <TreeLabel $selected={node.label === "ディスクの管理"}>{node.label}</TreeLabel>
              </TreeItem>
            ))}
          </Tree>
        </TreePanel>

        <RightColumn>
          <ListPanel>
            <TableArea>
              <VolumeTable>
                <colgroup>
                  {columns.map((c) => (
                    <col key={c.title} width={c.width} />
                  ))}
                </colgroup>
                <thead>
                  <tr>
                    {columns.map((c) => (
                      <HeadCell key={c.title} scope="col">{c.title}</HeadCell>
                    ))}
                  </tr>
                </thead>
                <tbody>
                  {volumes.map((v) => (
                    <tr key={v.name}>
                      <NameCell>
                        <VolumeName>
                          {v.icon}
                          {v.name && (
                            <VolumeLabel $selected={v.selected} $indent={v.name.startsWith("(")}>{v.name}</VolumeLabel>
                          )}
                        </VolumeName>
                      </NameCell>
                      <Cell $compact>パーティション</Cell>
                      <Cell $compact>ベーシック</Cell>
                      <Cell>{v.fs}</Cell>
                      <Cell>{v.status}</Cell>
                      <Cell>{v.size}</Cell>
                      <Cell>{v.free}</Cell>
                    </tr>
                  ))}
                </tbody>
              </VolumeTable>
            </TableArea>
            <ScrollTrack>
              <Arrow dir="left" label="左へスクロール" />
              <ThumbRange>
                <ScrollThumb><Grip /></ScrollThumb>
              </ThumbRange>
              <Arrow dir="right" label="右へスクロール" />
            </ScrollTrack>
          </ListPanel>

          <DiskPanel>
            <DiskArea>
              <DiskList>
                {disks.map((disk) => (
                  <DiskRow key={disk.title} $partial={disk.partial}>
                    <DiskInfo>
                      <DiskHeading>
                        {disk.icon}
                        <DiskTitle>{disk.title}</DiskTitle>
                      </DiskHeading>
                      <TextLine>{disk.kind}</TextLine>
                      <TextLine>{disk.size}</TextLine>
                      <TextLine>オンライン</TextLine>
                    </DiskInfo>
                    <Partitions $partial={disk.partial}>
                      {disk.parts.map((part) => (
                        <Partition key={part.size} $share={part.share} $selected={part.selected}>
                          <PartitionBar />
                          <PartitionBox $selected={part.selected}>
                            <PartitionLine $name>{part.name}</PartitionLine>
                            <PartitionLine>{part.size}</PartitionLine>
                            <PartitionLine>{part.status}</PartitionLine>
                          </PartitionBox>
                        </Partition>
                      ))}
                    </Partitions>
                  </DiskRow>
                ))}
              </DiskList>
              <ScrollTrack $vertical>
                <Arrow dir="up" label="上へスクロール" />
                <ThumbRange $vertical>
                  <ScrollThumb $vertical><Grip $vertical /></ScrollThumb>
                </ThumbRange>
                <Arrow dir="down" label="下へスクロール" />
              </ScrollTrack>
            </DiskArea>
            <Legend>
              <Swatch />
              プライマリ パーティション
            </Legend>
          </DiskPanel>
        </RightColumn>
      </Body>

      <StatusBar>
        <StatusCell />
        <StatusCell />
        <StatusCell />
      </StatusBar>
      <Taskbar>
        <TaskStart />
        <TaskArea />
        <TaskTray />
      </Taskbar>
    </Screen>
  );
}
